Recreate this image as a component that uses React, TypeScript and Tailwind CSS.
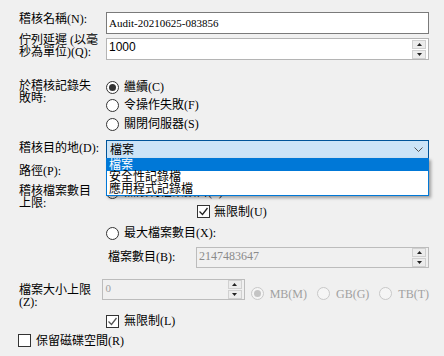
import clsx from "clsx";

// Windows-style audit settings dialog, with the destination dropdown open

const Radio = ({checked, disabled}: {checked?: boolean; disabled?: boolean}) => (
  <span
    className={clsx(
      "flex h-[13px] w-[13px] shrink-0 items-center justify-center rounded-full border",
      disabled ? "border-[#c8c8c8] bg-[#f5f5f5]" : "border-[#333] bg-white"
    )}
  >
    {checked && <span className={clsx("h-[7px] w-[7px] rounded-full", disabled ? "bg-[#c4c4c4]" : "bg-[#333]")} />}
  </span>
);

const Checkbox = ({checked, gray}: {checked?: boolean; gray?: boolean}) => (
  <span className="flex h-[13px] w-[13px] shrink-0 items-center justify-center border border-[#333] bg-white">
    {checked && (
      <svg width="11" height="11" viewBox="0 0 11 11">
        <path d="M1.5 5.5 L4.5 8.5 L9.5 2" fill="none" stroke={gray ? "#555" : "#222"} strokeWidth="1.3" />
      </svg>
    )}
  </span>
);

const Spinner = () => (
  <div className="mr-[2px] flex w-[14px] flex-col gap-[1px]">
    <div className="flex h-[9px] items-center justify-center border border-[#d0d0d0] bg-[#ececec]">
      <svg width="5" height="3" viewBox="0 0 5 3">
        <path d="M0 3 L2.5 0 L5 3 Z" fill="#222" />
      </svg>
    </div>
    <div className="flex h-[9px] items-center justify-center border border-[#d0d0d0] bg-[#ececec]">
      <svg width="5" height="3" viewBox="0 0 5 3">
        <path d="M0 0 L2.5 3 L5 0 Z" fill="#222" />
      </svg>
    </div>
  </div>
);

const Cursor = () => (
  <svg className="absolute left-[312px] top-[150px]" width="13" height="20" viewBox="0 0 13 20">
    <path d="M0.5 0.5 L0.5 16.5 L4.3 12.8 L6.8 18.8 L9.2 17.8 L6.8 12 L11.8 12 Z" fill="#fff" stroke="#000" strokeWidth="1" />
  </svg>
);

export default function App() {
  return (
    <div className="relative h-[356px] w-[444px] overflow-hidden bg-[#f0f0f0] pl-[19px] pr-[15px] pt-[12px] font-['Liberation_Serif','Noto_Sans_CJK_TC',serif] text-[12px] leading-[12px] text-black">
      {/* name */}
      <div className="flex">
        <div className="w-[87px] pt-[1px]">稽核名稱(N):</div>
        <div className="flex h-[22px] flex-1 items-center border border-[#7a7a7a] bg-white pl-[2px] text-[11px]">Audit-20210625-083856</div>
      </div>

      {/* queue delay */}
      <div className="flex">
        <div className="w-[87px]">
          佇列延遲 (以毫
          <br />
          秒為單位)(Q):
        </div>
        <div className="mt-[4px] flex h-[22px] flex-1 items-center border border-[#b4b4b4] bg-white pl-[2px]">
          <span className="flex-1 self-start pt-[2px] font-['Liberation_Sans',sans-serif]">1000</span>
          <Spinner />
        </div>
      </div>

      {/* on failure */}
      <div className="mt-[20px] flex">
        <div className="w-[87px]">
          於稽核記錄失
          <br />
          敗時:
        </div>
        <div className="flex flex-col">
          <div className="flex h-[14px] items-center gap-[5px]">
            <Radio checked />
            <span>繼續(C)</span>
          </div>
          <div className="mt-[4px] flex h-[14px] items-center gap-[5px]">
            <Radio />
            <span>令操作失敗(F)</span>
          </div>
          <div className="mt-[5px] flex h-[14px] items-center gap-[5px]">
            <Radio />
            <span>關閉伺服器(S)</span>
          </div>
        </div>
      </div>

      {/* destination */}
      <div className="mt-[9px] flex">
        <div className="w-[87px] pt-[2px]">稽核目的地(D):</div>
        <div className="relative z-10 flex h-[19px] flex-1 items-center border border-[#005499] bg-[#cce4f7] pl-[3px]">
          <span className="flex-1">檔案</span>
          <svg className="mr-[5px]" width="9" height="5" viewBox="0 0 9 5">
            <path d="M0.5 0.5 L4.5 4.5 L8.5 0.5" fill="none" stroke="#555" strokeWidth="1" />
          </svg>
          <div className="absolute left-[-1px] right-[-1px] top-full flex flex-col border border-t-0 border-[#0078d7] bg-white shadow-[2px_2px_3px_rgba(0,0,0,0.35)]">
            <div className="flex h-[13px] items-center bg-[#0078d7] pl-[2px] text-white">檔案</div>
            <div className="flex h-[12px] items-center pl-[2px]">安全性記錄檔</div>
            <div className="flex h-[12px] items-center pl-[2px]">應用程式記錄檔</div>
          </div>
        </div>
      </div>

      {/* path */}
      <div className="mt-[4px] flex">
        <div className="w-[87px] pt-[2px]">路徑(P):</div>
        <div className="h-[21px] flex-1 border border-[#7a7a7a] bg-white" />
      </div>

      {/* max files */}
      <div className="mt-[1px] flex">
        <div className="w-[87px]">
          稽核檔案數目
          <br />
          上限:
        </div>
        <div className="flex flex-1 flex-col">
          <div className="flex h-[14px] items-center gap-[5px]">
            <Radio checked />
            <span>無限制檔案數目(F)</span>
          </div>
          <div className="ml-[91px] mt-[6px] flex h-[13px] items-center gap-[4px]">
            <Checkbox checked />
            <span>無限制(U)</span>
          </div>
          <div className="mt-[8px] flex h-[14px] items-center gap-[5px]">
            <Radio />
            <span>最大檔案數目(X):</span>
          </div>
          <div className="mt-[7px] flex">
            <div className="w-[90px] pl-[2px] pt-[4px]">檔案數目(B):</div>
            <div className="flex h-[21px] flex-1 items-center border border-[#bcbcbc] pl-[2px] text-[#8a8a8a]">
              <span className="flex-1 self-start pt-[2px]">2147483647</span>
              <Spinner />
            </div>
          </div>
        </div>
      </div>

      {/* max file size */}
      <div className="mt-[11px] flex">
        <div className="w-[87px] pt-[5px]">
          檔案大小上限
          <br />
          (Z):
        </div>
        <div className="flex h-[21px] w-[148px] items-center border border-[#bcbcbc] pl-[2px] text-[11px] text-[#a0a0a0]">
          <span className="flex-1 self-start pt-[2px]">0</span>
          <Spinner />
        </div>
        <div className="ml-[6px] flex items-center gap-[6px] text-[#a0a0a0]">
          <Radio checked disabled />
          <span>MB(M)</span>
        </div>
        <div className="ml-[10px] flex items-center gap-[6px] text-[#a0a0a0]">
          <Radio disabled />
          <span>GB(G)</span>
        </div>
        <div className="ml-[10px] flex items-center gap-[6px] text-[#a0a0a0]">
          <Radio disabled />
          <span>TB(T)</span>
        </div>
      </div>

      <div className="ml-[87px] mt-[7px] flex h-[12px] items-center gap-[5px]">
        <Checkbox checked gray />
        <span>無限制(L)</span>
      </div>

      <div className="-ml-[1px] mt-[7px] flex h-[13px] items-center gap-[5px]">
        <Checkbox />
        <span>保留磁碟空間(R)</span>
      </div>

      <Cursor />
    </div>
  );
}
